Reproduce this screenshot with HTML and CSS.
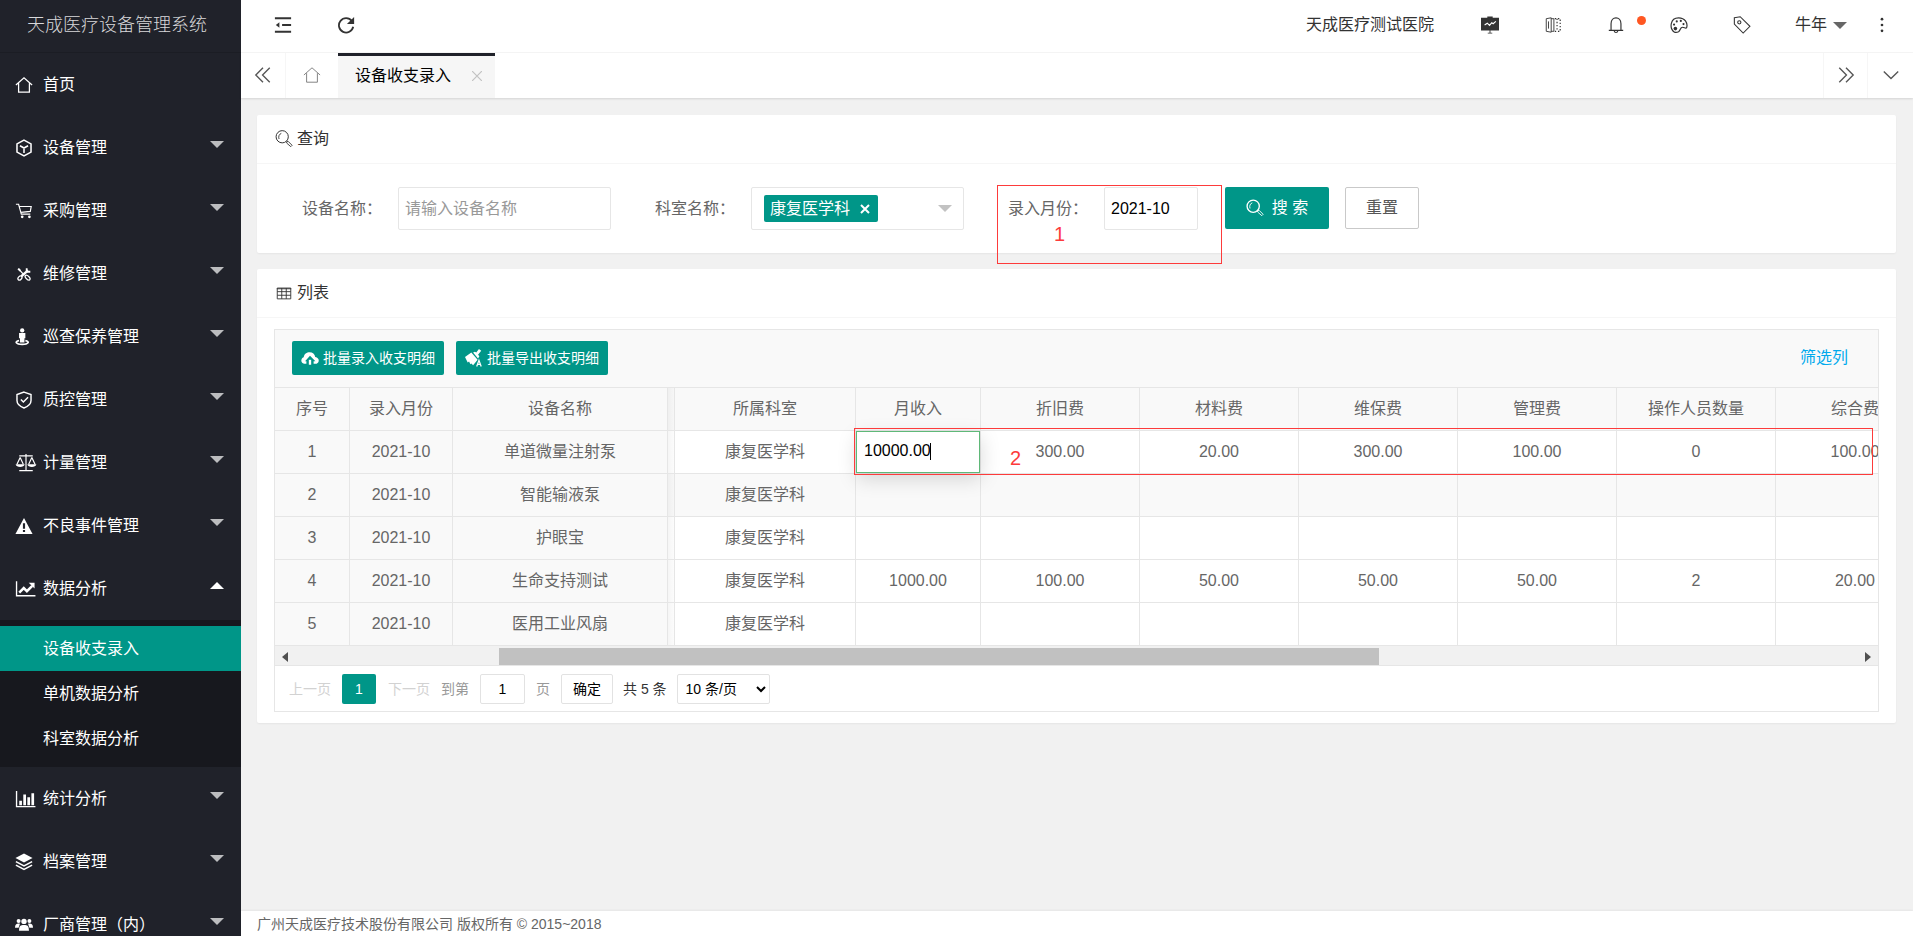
FILE: index.html
```html
<!DOCTYPE html>
<html lang="zh-CN">
<head>
  <meta charset="UTF-8">
  <meta name="viewport" content="width=device-width, initial-scale=1">
  <title>天成医疗设备管理系统</title>
  <link rel="stylesheet" href="styles.css">
</head>
<body>
  <aside class="side">
    <div class="logo">天成医疗设备管理系统</div>
    <nav class="menu">
      <a href="#" class="menu-item">
        <svg class="icon" viewBox="0 0 20 20"><path d="M1 10 10 2l9 8M4 8v10h12V8" fill="none" stroke="currentColor" stroke-width="1.4"/></svg>
        首页
      </a>
      <a href="#" class="menu-item">
        <svg class="icon" viewBox="0 0 20 20"><path d="M10 1.2 17.8 5.5v9L10 18.8 2.2 14.500v-9zM5.500 7.500 10 10l4.500-2.500M10 10v5.500" fill="none" stroke="currentColor" stroke-width="1.7"/></svg>
        设备管理<i class="arrow"></i>
      </a>
      <a href="#" class="menu-item">
        <svg class="icon" viewBox="0 0 20 20"><path d="M1 2.500h3l3 11h10M5 5h13l-1 5.500-10.500 1" fill="none" stroke="currentColor" stroke-width="1.3"/><circle cx="8" cy="16.500" r="1.500" fill="currentColor"/><circle cx="16" cy="16.500" r="1.500" fill="currentColor"/></svg>
        采购管理<i class="arrow"></i>
      </a>
      <a href="#" class="menu-item">
        <svg class="icon" viewBox="0 0 20 20"><g fill="none" stroke="currentColor"><path d="M4 4.500 10 11" stroke-width="1.400"/><path d="M3.500 4 6 6.500" stroke-width="2.200"/><path d="M7 12.500 14.500 6" stroke-width="2.600"/><path d="M13 3.500v4h4" stroke-width="2"/><ellipse cx="5.500" cy="14.500" rx="2.600" ry="1.800" transform="rotate(-45 5.500 14.500)" stroke-width="1.400"/><ellipse cx="14" cy="14" rx="3.400" ry="1.800" transform="rotate(45 14 14)" stroke-width="1.400"/></g></svg>
        维修管理<i class="arrow"></i>
      </a>
      <a href="#" class="menu-item">
        <svg class="icon" viewBox="0 0 20 20"><g fill="currentColor"><circle cx="8" cy="2.700" r="2.400"/><path d="M4.500 5.500h7v6h-1V16h-5v-4.500h-1z"/></g><path d="M4.500 14C-1 15 1 18.200 8 18.200S17 15 11.500 14" fill="none" stroke="currentColor" stroke-width="1.800"/></svg>
        巡查保养管理<i class="arrow"></i>
      </a>
      <a href="#" class="menu-item">
        <svg class="icon" viewBox="0 0 20 20"><path d="M10 1.200 17.800 4v6.500c0 4-3 6.500-7.800 8.400-4.800-1.900-7.800-4.400-7.800-8.400V4zM6.500 9.500l2.800 2.800L14.500 7" fill="none" stroke="currentColor" stroke-width="1.600"/></svg>
        质控管理<i class="arrow"></i>
      </a>
      <a href="#" class="menu-item">
        <svg class="icon icon-wide" viewBox="0 0 23 20"><path d="M4 2h15M11.500 0v18M4 18.500h15M5 4 1.500 11.500M5 4l3.500 7.500M18 4l-3.500 7.500M18 4l3.500 7.500" fill="none" stroke="currentColor" stroke-width="1.300"/><path d="M0 11.500h10c-.5 4-9.500 4-10 0zM13 11.500h10c-.5 4-9.500 4-10 0z" fill="currentColor"/></svg>
        计量管理<i class="arrow"></i>
      </a>
      <a href="#" class="menu-item">
        <svg class="icon" viewBox="0 0 20 20"><path fill-rule="evenodd" d="M10 1 19.500 19H.5zM8.800 7v6h2.400V7zm0 7.500v2.200h2.400v-2.200z" fill="currentColor"/></svg>
        不良事件管理<i class="arrow"></i>
      </a>
      <a href="#" class="menu-item">
        <svg class="icon icon-wide" viewBox="0 0 23 20"><path d="M1 1.500v16h21" fill="none" stroke="currentColor" stroke-width="1.500"/><path d="m4 14 5-5 3.500 3.500 6-6" fill="none" stroke="currentColor" stroke-width="2.800"/><path d="M14.500 3H21v6.500z" fill="currentColor"/></svg>
        数据分析<i class="arrow arrow-up"></i>
      </a>
      <div class="submenu">
        <a href="#" class="active">设备收支录入</a>
        <a href="#">单机数据分析</a>
        <a href="#">科室数据分析</a>
      </div>
      <a href="#" class="menu-item">
        <svg class="icon icon-wide" viewBox="0 0 23 20"><path d="M1 1v17.500h21" fill="none" stroke="currentColor" stroke-width="1.500"/><path d="M4 12h3v5H4zM8.500 5h3v12h-3zM13 8h3v9h-3zM17.500 3.500h3V17h-3z" fill="currentColor"/></svg>
        统计分析<i class="arrow"></i>
      </a>
      <a href="#" class="menu-item">
        <svg class="icon" viewBox="0 0 20 20"><path d="m10 .5 9.500 5-9.500 5-9.500-5z" fill="currentColor"/><path d="m1 9.500 9 4.800 9-4.800M1 13.500l9 4.800 9-4.800" fill="none" stroke="currentColor" stroke-width="1.700"/></svg>
        档案管理<i class="arrow"></i>
      </a>
      <a href="#" class="menu-item">
        <svg class="icon" viewBox="0 0 20 20"><g fill="currentColor"><circle cx="4" cy="5.500" r="2.200"/><circle cx="16" cy="5.500" r="2.200"/><circle cx="10" cy="6" r="3"/><path d="M0 13c0-4 2-5 5.500-4.500L4 13zM20 13c0-4-2-5-5.500-4.500L16 13zM4.500 16.500C4.500 11 6 10 10 10s5.500 1 5.500 6.500z"/></g></svg>
        厂商管理（内）<i class="arrow"></i>
      </a>
    </nav>
  </aside>

  <div class="main">
    <header class="topbar">
      <button class="top-btn" aria-label="收起菜单">
        <svg class="icon" viewBox="0 0 20 20"><path d="M1 2.500h18M9 10h10M1 17.500h18" fill="none" stroke="currentColor" stroke-width="2"/><path d="M6 7v6l-4-3z" fill="currentColor"/></svg>
      </button>
      <button class="top-btn" aria-label="刷新">
        <svg class="icon" viewBox="0 0 20 20"><path d="M16.500 5.500A8 8 0 1 0 18 12" fill="none" stroke="currentColor" stroke-width="2"/><path d="M19 1v8h-8z" fill="currentColor"/></svg>
      </button>
      <div class="top-right">
        <span class="hospital">天成医疗测试医院</span>
        <button class="top-btn" aria-label="大屏">
          <svg class="icon icon-board" viewBox="0 0 20 20"><path d="M0 2h7V0.500h6V2h7v14H0zM9.500 16h1v3h-1zM7.500 18.500h5v1h-5z" fill="currentColor"/><path d="m4 10 3-2 2.500 2.500L12 7.500l1.500 1L16.500 6" fill="none" stroke="#fff" stroke-width="1.300"/></svg>
        </button>
        <button class="top-btn" aria-label="切换">
          <svg class="icon" viewBox="0 0 20 20"><path d="M2.500 3 8 2v16l-5.500-1zM8 3h3v14H8M5 6v8" fill="none" stroke="currentColor"/><path d="M12 3h6v14h-6M14.500 3v14" fill="none" stroke="currentColor" stroke-width="1.300" stroke-dasharray="1.500 2"/></svg>
        </button>
        <button class="top-btn bell" aria-label="消息">
          <svg class="icon" viewBox="0 0 20 20"><path d="M2 16h16M4.500 16V8.500C4.500 4.500 7 2 10 2s5.500 2.500 5.500 6.500V16M8 16.500c.5 2.500 3.500 2.500 4 0" fill="none" stroke="currentColor" stroke-width="1.300"/></svg>
          <i class="dot"></i>
        </button>
        <button class="top-btn" aria-label="主题">
          <svg class="icon" viewBox="0 0 20 20"><path d="M5 18C-1 14 0 2 9.500 2 17 2 20 8 18.500 13c-1 1.500-2.500-.5-4.500-.5-3 0-2 3.500-4.500 5-1.500.8-3 1-4.500.5z" fill="none" stroke="currentColor" stroke-width="1.300"/><g fill="currentColor"><circle cx="4.500" cy="9.500" r="1.200"/><circle cx="7.500" cy="6" r="1.200"/><circle cx="12" cy="5.500" r="1.200"/><circle cx="15" cy="9" r="1.200"/><circle cx="6" cy="14" r="2"/></g></svg>
        </button>
        <button class="top-btn" aria-label="便签">
          <svg class="icon" viewBox="0 0 20 20"><path d="M1.500 2 8 .8 18.800 11.500l-7.500 7.500L1.500 9z" fill="none" stroke="currentColor" stroke-width="1.200"/><circle cx="7" cy="7" r="1.800" fill="none" stroke="currentColor" stroke-width="1.200"/></svg>
        </button>
        <button class="user">牛年<i class="arrow"></i></button>
        <button class="top-btn" aria-label="更多">
          <svg class="icon" viewBox="0 0 20 20"><g fill="currentColor"><circle cx="10" cy="3.500" r="1.500"/><circle cx="10" cy="10" r="1.500"/><circle cx="10" cy="16.500" r="1.500"/></g></svg>
        </button>
      </div>
    </header>

    <div class="tabs">
      <button class="tab-ctl" aria-label="向左">
        <svg class="icon" viewBox="0 0 20 20"><path d="M10 2 2 10l8 8M17.500 2l-8 8 8 8" fill="none" stroke="currentColor" stroke-width="1.500"/></svg>
      </button>
      <a href="#" class="tab-home" aria-label="首页">
        <svg class="icon" viewBox="0 0 20 20"><path d="M1 10 10 2l9 8M4 8v10h12V8" fill="none" stroke="currentColor"/></svg>
      </a>
      <div class="tab">
        <a href="#">设备收支录入</a>
        <button class="tab-close" aria-label="关闭">
          <svg viewBox="0 0 10 10"><path d="m0 0 10 10M10 0 0 10" stroke="currentColor" stroke-width="1.200"/></svg>
        </button>
      </div>
      <button class="tab-ctl tab-next" aria-label="向右">
        <svg class="icon" viewBox="0 0 20 20"><path d="m2.500 2 8 8-8 8M10 2l8 8-8 8" fill="none" stroke="currentColor" stroke-width="1.500"/></svg>
      </button>
      <button class="tab-ctl tab-down" aria-label="标签操作">
        <svg class="icon" viewBox="0 0 20 20"><path d="m2 6 8 8 8-8" fill="none" stroke="currentColor" stroke-width="1.500"/></svg>
      </button>
    </div>

    <main class="content">
      <section class="card">
        <h2 class="card-header">
          <svg class="icon" viewBox="0 0 20 20"><circle cx="8" cy="7.500" r="6.800" fill="none" stroke="currentColor" stroke-width="1.100"/><path d="M4.500 10C3.500 7.500 4.500 4.500 7 3.800M13 13l1.500-.5 4.500 4.500-1.500 1.500-4.500-4z" fill="none" stroke="currentColor"/></svg>
          查询
        </h2>
        <form class="search">
          <div class="field">
            <label for="name">设备名称：</label>
            <input type="text" id="name" class="text" placeholder="请输入设备名称">
          </div>
          <div class="field">
            <span class="label" id="deptLabel">科室名称：</span>
            <div class="multi" role="group" aria-labelledby="deptLabel">
              <button type="button" class="tag">康复医学科
                <svg viewBox="0 0 10 10"><path d="m1 1 8 8M9 1 1 9" stroke="currentColor" stroke-width="2"/></svg>
              </button>
              <i class="arrow"></i>
            </div>
          </div>
          <div class="field marked">
            <label for="month">录入月份：</label>
            <input type="text" id="month" class="text text-short" value="2021-10">
            <div class="mark mark-month"><b>1</b></div>
          </div>
          <div class="actions">
            <button type="button" class="btn btn-search">
              <svg class="icon" viewBox="0 0 20 20"><circle cx="8" cy="8" r="6.800" fill="none" stroke="currentColor" stroke-width="1.500"/><path d="M4.500 10.500C3.500 8 4.500 5 7 4.300M13 13l1.500-.5 4.500 4.500-1.500 1.500-4.500-4z" fill="none" stroke="currentColor"/></svg>
              搜 索
            </button>
            <button type="reset" class="btn btn-plain">重置</button>
          </div>
        </form>
      </section>

      <section class="card">
        <h2 class="card-header">
          <svg class="icon" viewBox="0 0 20 20"><path d="M2.500 4.500h15v12h-15zM2.500 8.500h15M2.500 12.500h15M7.500 4.500v12M12.500 4.500v12M2 5.300h16" fill="none" stroke="currentColor"/></svg>
          列表
        </h2>
        <div class="panel">
          <div class="toolbar">
            <button class="btn btn-sm">
              <svg class="icon" viewBox="0 0 20 20"><path d="M6 16.500H4.500C1 16.500 0 13.500.5 12c.4-1.500 1.500-2.500 2.500-2.700C3.500 5 6.500 3.500 9.500 3.500c3.500 0 5.800 2 6.300 5.300 2.700.5 4.200 2.200 3.900 4.500-.3 2-1.800 3.200-3.700 3.200h-2v-3h2L10 7.500 4.500 13.500H6z" fill="currentColor"/><path d="M8.700 12h2.600v5.500H8.700z" fill="currentColor"/></svg>
              批量录入收支明细
            </button>
            <button class="btn btn-sm">
              <svg class="icon" viewBox="0 0 20 20"><path d="m0 9 7-5 7 8-5 6-2-2-1 1-1.500-3L3 15zM9 4l2-1 1.500 1L15.500 0 18 2l-3.500 4.500L16 8l-1.500 2.500z" fill="currentColor"/><path d="m13 19.500 2.500-7 2.500 7M14 17h3" fill="none" stroke="currentColor" stroke-width="1.400"/></svg>
              批量导出收支明细
            </button>
            <a href="#" class="filter">筛选列</a>
          </div>

          <div class="table-wrap">
            <table>
              <colgroup>
                <col class="c-no"><col class="c-month"><col class="c-name"><col class="c-gap"><col class="c-dept"><col class="c-income">
                <col class="c-fee"><col class="c-fee"><col class="c-fee"><col class="c-fee"><col class="c-fee"><col class="c-fee">
              </colgroup>
              <thead>
                <tr><th>序号</th><th>录入月份</th><th>设备名称</th><td class="gap"></td><th>所属科室</th><th>月收入</th><th>折旧费</th><th>材料费</th><th>维保费</th><th>管理费</th><th>操作人员数量</th><th>综合费</th></tr>
              </thead>
              <tbody>
                <tr><td>1</td><td>2021-10</td><td>单道微量注射泵</td><td class="gap"></td><td>康复医学科</td><td class="editing"><input type="text" aria-label="月收入" value="10000.00"><i class="caret"></i></td><td>300.00</td><td>20.00</td><td>300.00</td><td>100.00</td><td>0</td><td>100.00</td></tr>
                <tr><td>2</td><td>2021-10</td><td>智能输液泵</td><td class="gap"></td><td>康复医学科</td><td></td><td></td><td></td><td></td><td></td><td></td><td></td></tr>
                <tr><td>3</td><td>2021-10</td><td>护眼宝</td><td class="gap"></td><td>康复医学科</td><td></td><td></td><td></td><td></td><td></td><td></td><td></td></tr>
                <tr><td>4</td><td>2021-10</td><td>生命支持测试</td><td class="gap"></td><td>康复医学科</td><td>1000.00</td><td>100.00</td><td>50.00</td><td>50.00</td><td>50.00</td><td>2</td><td>20.00</td></tr>
                <tr><td>5</td><td>2021-10</td><td>医用工业风扇</td><td class="gap"></td><td>康复医学科</td><td></td><td></td><td></td><td></td><td></td><td></td><td></td></tr>
              </tbody>
            </table>
          </div>
          <div class="mark mark-row"><b>2</b></div>
          <div class="scrollbar">
            <i class="sb-left"></i>
            <div class="track"><div class="thumb"></div></div>
            <i class="sb-right"></i>
          </div>

          <div class="pager">
            <a class="disabled">上一页</a>
            <a href="#" class="current">1</a>
            <a class="disabled">下一页</a>
            <label for="page" class="goto">到第</label>
            <input type="text" id="page" value="1">
            <span class="unit">页</span>
            <button>确定</button>
            <span class="total">共 5 条</span>
            <select aria-label="每页条数"><option>10 条/页</option><option>20 条/页</option></select>
          </div>
        </div>
      </section>
    </main>

    <footer>广州天成医疗技术股份有限公司 版权所有 © 2015~2018</footer>
  </div>
</body>
</html>
```
FILE: styles.css
```css
* { box-sizing: border-box; }
body {
  margin: 0;
  display: flex;
  height: 100vh;
  overflow: hidden;
  background: #f1f1f1;
  color: #333;
  font: 16px/24px "Liberation Sans", "Noto Sans CJK SC", sans-serif;
}
a { color: inherit; text-decoration: none; }
button, input, select { font: inherit; color: inherit; margin: 0; }
button { border: none; background: none; padding: 0; cursor: pointer; }
.icon { width: 18px; height: 18px; flex: none; }
.arrow {
  border: 7px solid transparent;
  border-top-color: currentColor;
  border-bottom: none;
}

/* sidebar */
.side {
  width: 241px;
  flex: none;
  overflow: hidden;
  background: #20222a;
  color: #fff;
}
.logo {
  height: 53px;
  padding-right: 7px;
  line-height: 50px;
  border-bottom: 1px solid #1b1d24;
  text-align: center;
  font-size: 18px;
  font-weight: 300;
  color: #d8d8da;
}
.menu-item {
  display: flex;
  align-items: center;
  height: 63px;
  padding: 0 17px 0 15px;
}
.menu-item .icon { margin-right: 10px; }
.menu-item .icon-wide { width: 22px; margin-right: 6px; }
.menu-item .arrow {
  margin: 0 0 6px auto;
  color: #bcbdbf;
}
.menu-item .arrow-up { transform: rotate(180deg); color: #fff; }
.submenu { background: #17181e; padding: 6px 0; }
.submenu a {
  display: block;
  height: 45px;
  line-height: 45px;
  padding-left: 43px;
}
.submenu .active { background: #009688; }

/* top */
.main {
  flex: 1;
  min-width: 0;
  display: flex;
  flex-direction: column;
}
.topbar {
  display: flex;
  height: 53px;
  flex: none;
  padding-left: 10px;
  background: #fff;
  border-bottom: 1px solid #f6f6f6;
}
.top-btn {
  display: flex;
  align-items: center;
  justify-content: center;
  width: 63px;
  padding-bottom: 2px;
}
.top-right {
  display: flex;
  align-items: center;
  margin-left: auto;
}
.top-right > * { height: 52px; }
.hospital { padding: 0 24px 0 22px; line-height: 50px; }
.icon-board { width: 20px; }
.bell { position: relative; }
.dot {
  position: absolute;
  right: 1px;
  top: 16px;
  width: 9px;
  height: 9px;
  border-radius: 50%;
  background: #ff5722;
}
.user {
  display: flex;
  align-items: center;
  gap: 6px;
  width: 77px;
  padding: 0 0 2px 22px;
}
.user .arrow { color: #666; }

.tabs {
  position: relative;
  display: flex;
  flex: none;
  height: 45px;
  background: #fff;
  box-shadow: 0 1px 2px rgba(0, 0, 0, .12);
}
.tab-ctl, .tab-home {
  display: flex;
  align-items: center;
  justify-content: center;
  width: 45px;
  padding-bottom: 2px;
  color: #555;
  border-right: 1px solid #f6f6f6;
}
.tab-home { width: 52px; border: none; color: #777; }
.tab {
  display: flex;
  align-items: center;
  width: 157px;
  padding: 0 13px 2px 17px;
  border-top: 3px solid #20222a;
  background: #f6f6f6;
  color: #000;
}
.tab-close {
  width: 10px;
  height: 10px;
  margin-left: auto;
  color: #c2c2c2;
}
.tab-close svg { display: block; }
.tab-next { margin-left: auto; border-left: 1px solid #f6f6f6; }
.tab-down { border-right: none; }

/* content */
.content {
  flex: 1;
  min-height: 0;
  padding: 17px 17px 0 16px;
}
.card {
  margin-bottom: 16px;
  border-radius: 2px;
  background: #fff;
  box-shadow: 0 1px 2px rgba(0, 0, 0, .05);
}
.card-header {
  display: flex;
  align-items: center;
  gap: 4px;
  height: 49px;
  margin: 0;
  padding: 0 18px 1px;
  border-bottom: 1px solid #f6f6f6;
  font-size: 16px;
  font-weight: inherit;
}
.search {
  display: flex;
  align-items: center;
  padding: 23px 17px;
}
.field {
  display: flex;
  align-items: center;
  height: 43px;
  margin-right: 16px;
}
.field label, .label {
  width: 124px;
  padding-right: 16px;
  text-align: right;
  white-space: nowrap;
  color: #666;
}
.text, .multi {
  width: 213px;
  height: 43px;
  padding: 0 6px;
  border: 1px solid #e6e6e6;
  border-radius: 2px;
  background: #fff;
  color: #000;
}
.text::placeholder { color: #999; }
.text-short { width: 94px; }
.multi {
  display: flex;
  align-items: center;
  justify-content: space-between;
  padding: 0 11px 0 12px;
}
.multi .arrow { color: #c2c2c2; }
.tag {
  display: flex;
  align-items: center;
  gap: 10px;
  height: 27px;
  padding: 0 8px 0 6px;
  border-radius: 2px;
  background: #009688;
  color: #fff;
}
.tag svg { width: 10px; height: 10px; }
.actions {
  display: flex;
  align-self: flex-start;
  gap: 16px;
  padding-left: 11px;
}
.btn {
  display: flex;
  align-items: center;
  justify-content: center;
  height: 42px;
  border-radius: 2px;
  background: #009688;
  color: #fff;
}
.btn-search { width: 104px; gap: 8px; }
.btn-plain {
  width: 74px;
  border: 1px solid #c9c9c9;
  background: #fff;
  color: #555;
}
.btn-sm {
  height: 34px;
  padding: 0 9px;
  gap: 4px;
  font-size: 14px;
}

/* red callouts */
.marked { position: relative; }
.mark {
  position: absolute;
  border: 1px solid #fd3b3b;
  color: #fd3b3b;
  pointer-events: none;
}
.mark b {
  position: absolute;
  font: 20px/24px "Liberation Sans", sans-serif;
}
.mark-month { left: 17px; top: -2px; width: 225px; height: 79px; }
.mark-month b { left: 56px; top: 36px; }
.mark-row { left: 579px; right: 5px; top: 98px; height: 47px; }
.mark-row b { left: 155px; top: 17px; }

/* table */
.panel {
  position: relative;
  margin: 11px 17px 0;
  border: 1px solid #e6e6e6;
}
.card:last-child { padding-bottom: 11px; }
.toolbar {
  display: flex;
  align-items: center;
  gap: 12px;
  height: 58px;
  padding: 0 30px 2px 17px;
  border-bottom: 1px solid #e6e6e6;
  background: #f9f9f9;
}
.filter { margin-left: auto; color: #01aaed; }
.table-wrap { overflow: hidden; }
table {
  table-layout: fixed;
  width: 1660px;
  border-collapse: separate;
  border-spacing: 0;
  color: #666;
}
.c-no { width: 75px; }
.c-month { width: 103px; }
.c-name { width: 215px; }
.c-gap { width: 7px; }
.c-dept { width: 181px; }
.c-income { width: 125px; }
.c-fee { width: 159px; }
th, td {
  height: 43px;
  padding: 0;
  border: 1px solid #e6e6e6;
  border-width: 0 1px 1px 0;
  text-align: center;
  font-weight: inherit;
}
thead tr, tbody tr:nth-child(2), td:nth-child(-n+3) { background: #f9f9f9; }
.gap { background: linear-gradient(90deg, rgba(0, 0, 0, .04), rgba(0, 0, 0, .01)); }
.editing { position: relative; }
.editing input {
  display: block;
  width: 124px;
  height: 42px;
  padding: 0 7px 2px;
  border: 1px solid #5fb878;
  background: #fff;
  color: #000;
  box-shadow: 1px 6px 20px rgba(0, 0, 0, .15);
}
.caret {
  position: absolute;
  left: 74px;
  top: 12px;
  width: 1px;
  height: 17px;
  background: #000;
}
.scrollbar {
  display: flex;
  align-items: center;
  height: 19px;
  padding: 2px 7px 0;
  background: #f1f1f1;
}
.sb-left, .sb-right {
  border: 5px solid transparent;
  border-right: 6px solid #505050;
  border-left: none;
}
.sb-right { transform: rotate(180deg); }
.track { flex: 1; height: 17px; padding: 0 8px; }
.thumb {
  width: 56.4%;
  height: 17px;
  margin-left: 13%;
  background: #c1c1c1;
}

.pager {
  display: flex;
  align-items: center;
  height: 46px;
  padding: 0 14px;
  border-top: 1px solid #e6e6e6;
  font-size: 14px;
}
.pager .disabled { color: #d2d2d2; }
.current {
  width: 34px;
  height: 30px;
  margin: 0 12px 0 11px;
  border-radius: 2px;
  background: #009688;
  color: #fff;
  line-height: 30px;
  text-align: center;
}
.goto, .unit { margin: 0 11px; color: #999; }
.pager input, .pager button, .pager select {
  height: 30px;
  border: 1px solid #e2e2e2;
  border-radius: 2px;
  background: #fff;
  color: #000;
}
.pager input { width: 45px; padding: 0; text-align: center; }
.pager button { width: 52px; }
.total { margin: 0 10px; }
.pager select { width: 93px; padding: 0 4px; }

footer {
  height: 25px;
  flex: none;
  padding: 0 16px;
  background: #fff;
  box-shadow: 0 -1px 2px rgba(0, 0, 0, .05);
  font-size: 14px;
  line-height: 26px;
  color: #666;
}
```
